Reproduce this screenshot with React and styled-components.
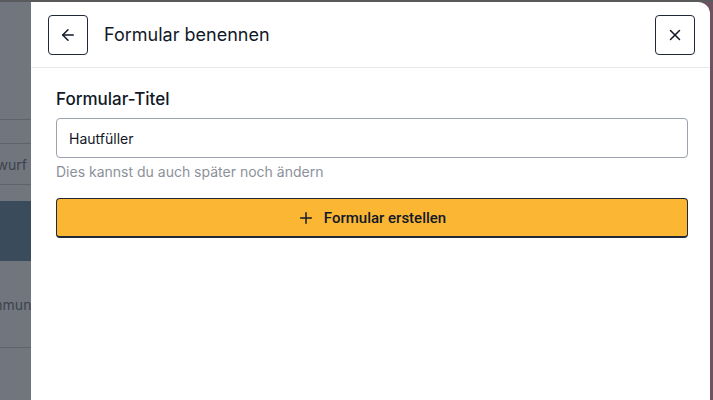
import React from "react";
import styled, { createGlobalStyle } from "styled-components";

const GlobalStyle = createGlobalStyle`
  html, body {
    margin: 0;
    padding: 0;
    height: 100%;
  }
  body {
    font-family: Inter, "Noto Sans", sans-serif;
    color: #111827;
    overflow: hidden;
  }
  #root {
    height: 100%;
  }
`

const Screen = styled.div`
  height: 400px;
  width: 713px;
  display: flex;
  flex-direction: column;
  background-color: #6e5260;
`

const TopStrip = styled.div`
  height: 2px;
  background-color: #585a5c;
`

const Body = styled.div`
  flex: 1;
  display: flex;
  flex-direction: row;
  min-height: 0;
`

const Behind = styled.div`
  width: 31px;
  background-color: #70757e;
  display: flex;
  flex-direction: column;
  overflow: hidden;
  padding-top: 117px;
`

const BehindRow = styled.div`
  height: ${props => props.h}px;
  flex-shrink: 0;
  border-top: 1px solid ${props => props.line ? "#5d636b" : "transparent"};
  background-color: ${props => props.dark ? "#3a4b5c" : "transparent"};
  color: #3d434b;
  font-size: 14px;
  display: flex;
  align-items: center;
  justify-content: flex-end;
  white-space: nowrap;
  box-sizing: border-box;
  padding-right: 4px;
`

const Overflowing = styled.span`
  margin-right: ${props => props.cut}px;
`

const RightStrip = styled.div`
  width: 3px;
`

const Modal = styled.div`
  flex: 1;
  background-color: white;
  border-top-right-radius: 12px;
  display: flex;
  flex-direction: column;
`

const Header = styled.div`
  height: 65px;
  display: flex;
  flex-direction: row;
  align-items: center;
  padding: 0 15px 0 17px;
  border-bottom: 1px solid #e5e7eb;
  gap: 16px;
`

const IconButton = styled.button`
  width: 40px;
  height: 40px;
  border: 1px solid #1f2937;
  border-radius: 4px;
  background-color: white;
  display: flex;
  align-items: center;
  justify-content: center;
  padding: 0;
  color: #111827;
`

const Title = styled.h2`
  flex: 1;
  margin: 0;
  font-size: 18px;
  font-weight: 400;
  color: #111827;
`

const Content = styled.div`
  padding: 20px 22px 0 25px;
  display: flex;
  flex-direction: column;
`

const Label = styled.label`
  font-size: 17px;
  font-weight: 500;
  line-height: 22px;
  color: #111827;
  margin-bottom: 8px;
`

const Input = styled.input`
  height: 40px;
  box-sizing: border-box;
  border: 1px solid #9ca3af;
  border-radius: 4px;
  padding: 0 12px;
  font-family: Inter, sans-serif;
  font-size: 14px;
  color: #111827;
  outline: none;
`

const Hint = styled.div`
  font-size: 14px;
  color: #8b919b;
  margin-top: 5px;
  line-height: 18px;
`

const PrimaryButton = styled.button`
  margin-top: 17px;
  height: 40px;
  box-sizing: border-box;
  background-color: #fbb634;
  border: 1px solid #1f2937;
  border-bottom-width: 2px;
  border-radius: 4px;
  display: flex;
  align-items: center;
  justify-content: center;
  gap: 10px;
  font-family: Roboto, Inter, sans-serif;
  font-size: 15px;
  font-weight: 500;
  color: #111827;
  padding: 0;
`

const ArrowLeft = () => (
  <svg width="18" height="18" viewBox="0 0 24 24" fill="none" stroke="currentColor" strokeWidth="2" strokeLinecap="round" strokeLinejoin="round">
    <path d="M19 12H5" />
    <path d="M12 19l-7-7 7-7" />
  </svg>
)

const CloseIcon = () => (
  <svg width="18" height="18" viewBox="0 0 24 24" fill="none" stroke="currentColor" strokeWidth="2" strokeLinecap="round">
    <path d="M18 6L6 18" />
    <path d="M6 6l12 12" />
  </svg>
)

const PlusIcon = () => (
  <svg width="16" height="16" viewBox="0 0 24 24" fill="none" stroke="currentColor" strokeWidth="2.2" strokeLinecap="round">
    <path d="M12 4v16" />
    <path d="M4 12h16" />
  </svg>
)

function App() {
    return (
        <Screen>
            <GlobalStyle />
            <TopStrip />
            <Body>
                <Behind>
                    <BehindRow h={24} line />
                    <BehindRow h={41} line>Entwurf</BehindRow>
                    <BehindRow h={17} line />
                    <BehindRow h={60} dark />
                    <BehindRow h={86}><Overflowing cut={-48}>Kommunikation</Overflowing></BehindRow>
                    <BehindRow h={60} line />
                </Behind>
                <Modal>
                    <Header>
                        <IconButton aria-label="Zurück"><ArrowLeft /></IconButton>
                        <Title>Formular benennen</Title>
                        <IconButton aria-label="Schließen"><CloseIcon /></IconButton>
                    </Header>
                    <Content>
                        <Label>Formular-Titel</Label>
                        <Input defaultValue="Hautfüller" />
                        <Hint>Dies kannst du auch später noch ändern</Hint>
                        <PrimaryButton><PlusIcon />Formular erstellen</PrimaryButton>
                    </Content>
                </Modal>
                <RightStrip />
            </Body>
        </Screen>
    )
}

export default App;
